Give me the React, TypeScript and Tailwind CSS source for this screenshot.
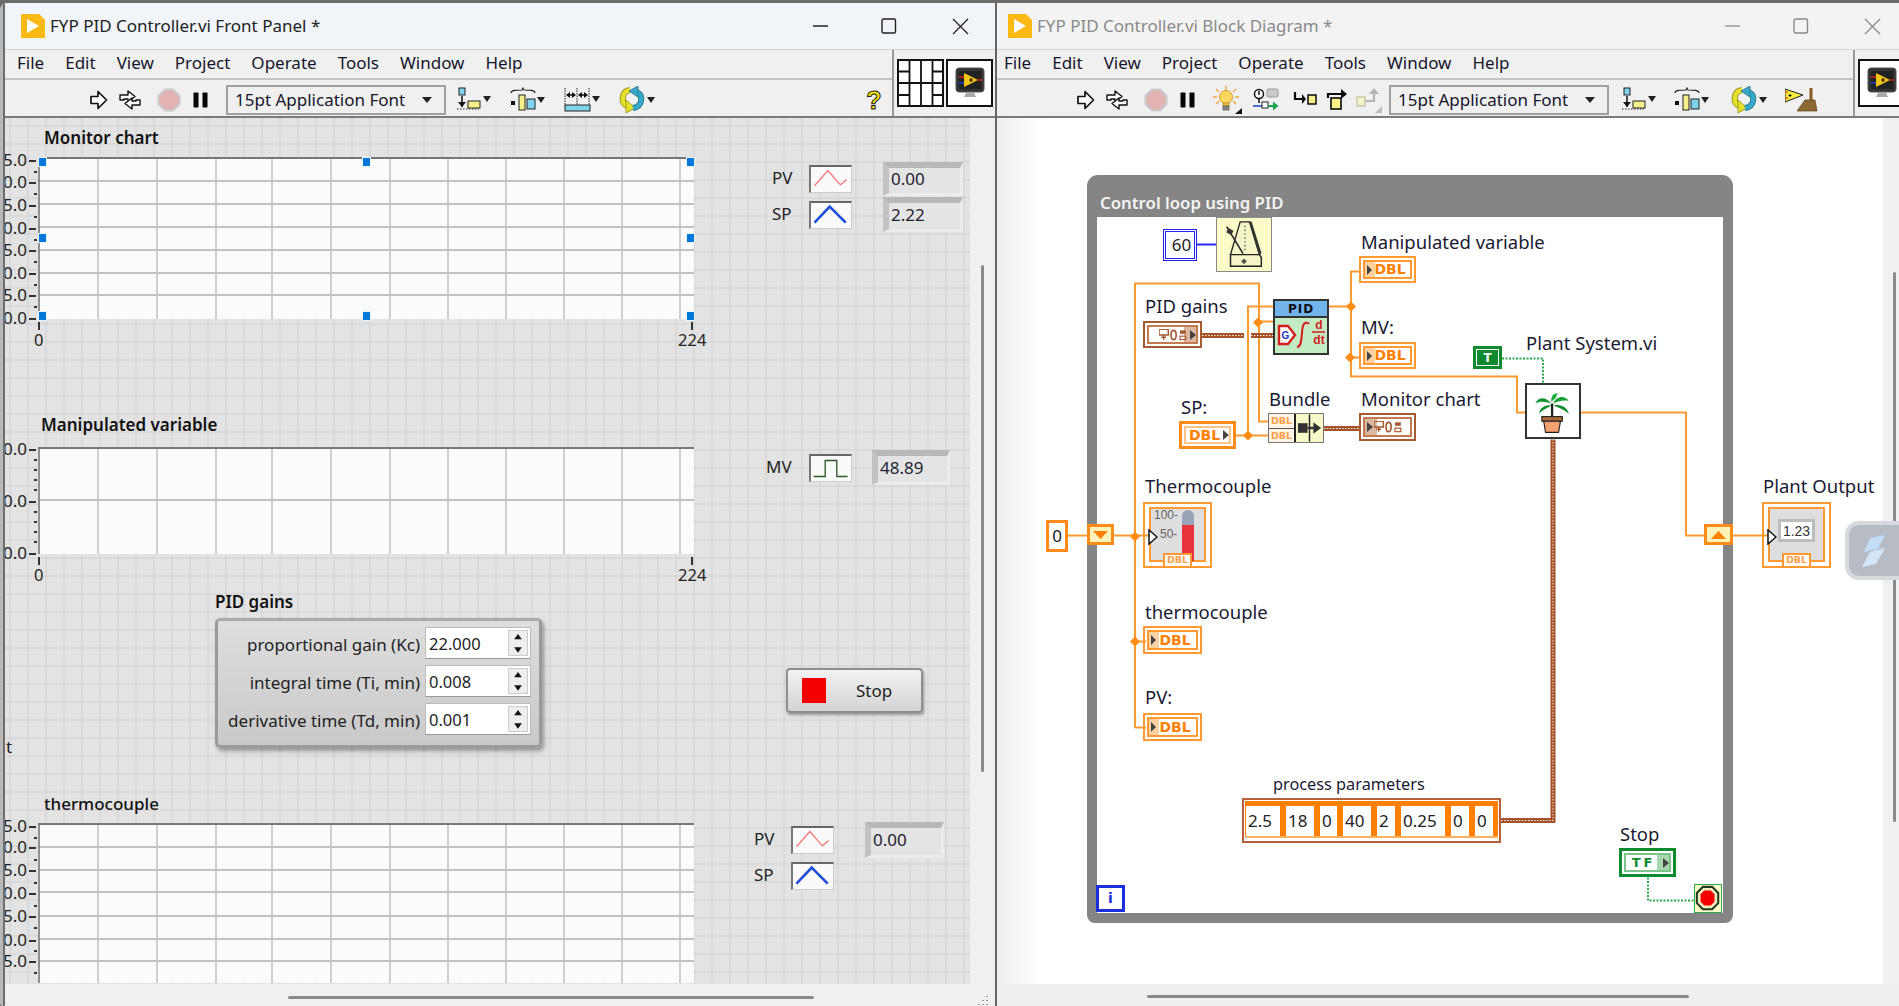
import type { ReactNode } from 'react'

const vLines = [60, 119, 178, 234, 293, 352, 410, 468, 526, 584, 642]

function WindowIcon() {
  return (
    <svg width="24" height="24" viewBox="0 0 24 24" className="shrink-0">
      <path d="M0 0H18L24 6V24H0Z" fill="#fdb913" />
      <path d="M6 5L18 12L6 19Z" fill="#fff" />
    </svg>
  )
}

function WinButtons({ color, last }: { color: string; last: string }) {
  return (
    <div className={`ml-auto flex items-center ${last}`}>
      <svg width="16" height="16" viewBox="0 0 16 16"><path d="M0 8H15" stroke={color} strokeWidth="1.3" /></svg>
      <svg width="16" height="16" viewBox="0 0 16 16" className="ml-[52px]"><rect x="1" y="1" width="13.5" height="14" rx="1.5" fill="none" stroke={color} strokeWidth="1.4" /></svg>
      <svg width="17" height="17" viewBox="0 0 17 17" className="ml-[55px]"><path d="M1 1L16 16M16 1L1 16" stroke={color} strokeWidth="1.3" /></svg>
    </div>
  )
}

function MenuBar({ className }: { className: string }) {
  return (
    <div className={`flex h-[30px] items-center gap-[21px] border-b-2 border-b-[#c4c4c4] pb-[2px] text-[17px] text-[#15152a] ${className}`}>
      {['File', 'Edit', 'View', 'Project', 'Operate', 'Tools', 'Window', 'Help'].map(m => <span key={m}>{m}</span>)}
    </div>
  )
}

function RunArrow() {
  return <svg width="18" height="20" viewBox="0 0 18 20" className="shrink-0"><path d="M1 6.5H8V1.5L16.5 10L8 18.5V13.5H1Z" fill="#fff" stroke="#111" strokeWidth="1.7" strokeLinejoin="round" /></svg>
}

function RunCont({ className }: { className: string }) {
  return (
    <svg width="24" height="24" viewBox="0 0 24 24" className={`shrink-0 ${className}`}>
      <path d="M2 12V7H10V3L17 8.5L10 14V11H6V12Z" fill="#fff" stroke="#111" strokeWidth="1.4" strokeLinejoin="round" />
      <path d="M22 12V17H14V21L7 15.5L14 10V13H18V12Z" fill="#fff" stroke="#111" strokeWidth="1.4" strokeLinejoin="round" />
    </svg>
  )
}

function AbortIcon({ className }: { className: string }) {
  return (
    <svg width="24" height="24" viewBox="0 0 24 24" className={`shrink-0 ${className}`}>
      <path d="M8 1.5H16L22.5 8V16L16 22.5H8L1.5 16V8Z" fill="#e3b3b3" stroke="#c9c9c9" strokeWidth="2" strokeLinejoin="round" />
    </svg>
  )
}

function PauseIcon({ className }: { className: string }) {
  return (
    <svg width="15" height="16" viewBox="0 0 15 16" className={`shrink-0 ${className}`}>
      <rect x="0.5" y="0.5" width="5" height="15" rx="0.8" fill="#050505" />
      <rect x="9.5" y="0.5" width="5" height="15" rx="0.8" fill="#050505" />
    </svg>
  )
}

function Bulb({ className }: { className: string }) {
  return (
    <svg width="29" height="28" viewBox="0 0 29 28" className={`shrink-0 ${className}`}>
      <path d="M13 0V4M3 3L6 6M23 3L20 6M0 11H4M22 11H26M3 18L6 15M23 18L20 15" stroke="#f5a742" strokeWidth="1.4" />
      <circle cx="13" cy="11" r="6.5" fill="#fbd760" stroke="#d49a2a" />
      <rect x="10" y="17" width="6" height="3" fill="#f0c040" stroke="#b08020" strokeWidth="0.7" />
      <rect x="10" y="20" width="6" height="4" fill="#888" stroke="#555" strokeWidth="0.7" />
      <path d="M29 22V28H22Z" fill="#111" />
    </svg>
  )
}

function ProbeIcon({ className }: { className: string }) {
  return (
    <svg width="26" height="26" viewBox="0 0 26 26" className={`shrink-0 ${className}`}>
      <circle cx="6" cy="7" r="4.5" fill="#fff" stroke="#111" strokeWidth="1.5" />
      <path d="M6 4V8" stroke="#111" strokeWidth="1.5" />
      <path d="M6 11.5V16" stroke="#111" strokeWidth="1.5" />
      <rect x="14" y="2" width="11" height="8" rx="1.5" fill="#c9c9c9" stroke="#9a9a9a" />
      <path d="M0 19H12" stroke="#1d4ed8" strokeWidth="1.6" />
      <rect x="9" y="15" width="6" height="6" fill="#fff" stroke="#222" />
      <path d="M15 18H20V14.5L25.5 19L20 23.5V20H15Z" fill="#16a34a" />
    </svg>
  )
}

function StepInto({ className }: { className: string }) {
  return (
    <svg width="24" height="18" viewBox="0 0 24 18" className={`shrink-0 ${className}`}>
      <path d="M2 1V8H10" fill="none" stroke="#0a0a0a" strokeWidth="2.2" />
      <path d="M9 3L13 8L9 13Z" fill="#0a0a0a" />
      <rect x="15" y="4" width="8" height="9" fill="#fbf08a" stroke="#0a0a0a" strokeWidth="1.5" />
    </svg>
  )
}

function StepOver({ className }: { className: string }) {
  return (
    <svg width="22" height="22" viewBox="0 0 22 22" className={`shrink-0 ${className}`}>
      <path d="M2 9V5H15" fill="none" stroke="#0a0a0a" strokeWidth="2.2" />
      <path d="M15 0L21 5L15 10Z" fill="#0a0a0a" />
      <rect x="5" y="9" width="10" height="11" fill="#fbf08a" stroke="#0a0a0a" strokeWidth="1.6" />
    </svg>
  )
}

function StepOut({ className }: { className: string }) {
  return (
    <svg width="26" height="26" viewBox="0 0 26 26" className={`shrink-0 ${className}`}>
      <rect x="1" y="10" width="8" height="9" fill="#f2f2c8" stroke="#c8c8b0" strokeWidth="1.4" />
      <path d="M9 14H18V6" fill="none" stroke="#b5b5b5" strokeWidth="2.2" />
      <path d="M13 7L18 1L23 7Z" fill="#b5b5b5" />
      <path d="M26 19V26H19Z" fill="#bdbdbd" />
    </svg>
  )
}

function Caret({ x, y }: { x: number; y: number }) {
  return <path d={`M${x} ${y}H${x + 8}L${x + 4} ${y + 6}Z`} fill="#222" />
}

function AlignIcon({ className = '' }: { className?: string }) {
  return (
    <svg width="35" height="26" viewBox="0 0 35 26" className={`shrink-0 ${className}`}>
      <rect x="2" y="1" width="6" height="7" fill="#7fd3ea" stroke="#222" />
      <path d="M5 9V20" stroke="#111" strokeWidth="1.5" />
      <path d="M1 15H9L5 20Z" fill="#111" />
      <path d="M0 22H22" stroke="#222" strokeDasharray="1.5 1.5" />
      <rect x="11" y="14" width="12" height="7" fill="#f5f08c" stroke="#222" />
      <Caret x={26} y={9} />
    </svg>
  )
}

function DistIcon({ className = '' }: { className?: string }) {
  return (
    <svg width="36" height="26" viewBox="0 0 36 26" className={`shrink-0 ${className}`}>
      <path d="M1 6C1 3 6 3 12 3L13 1L14 3C20 3 25 3 25 6" fill="none" stroke="#222" strokeWidth="1.1" />
      <rect x="1" y="14" width="4" height="4" fill="#111" />
      <rect x="9" y="8" width="6" height="15" fill="#f5f08c" stroke="#222" />
      <rect x="17" y="12" width="8" height="10" fill="#7fd3ea" stroke="#222" />
      <Caret x={27} y={10} />
    </svg>
  )
}

function ResizeIcon({ className = '' }: { className?: string }) {
  return (
    <svg width="36" height="26" viewBox="0 0 36 26" className={`shrink-0 ${className}`}>
      <path d="M1 1V18M25 1V18M13 1V18" stroke="#222" strokeDasharray="1.5 1" />
      <path d="M3 8H11M15 8H23" stroke="#111" strokeWidth="1.5" />
      <path d="M2 8L6 5V11ZM12 8L8 5V11ZM14 8L18 5V11ZM24 8L20 5V11Z" fill="#111" />
      <rect x="1" y="18" width="25" height="6" fill="#7fd3ea" stroke="#222" />
      <Caret x={28} y={9} />
    </svg>
  )
}

function ReorderIcon({ className = '' }: { className?: string }) {
  return (
    <svg width="37" height="28" viewBox="0 0 37 28" className={`shrink-0 ${className}`}>
      <path d="M11 4C3 5 1 16 8 20" fill="none" stroke="#8a8a10" strokeWidth="6" />
      <path d="M11 4C3 5 1 16 8 20" fill="none" stroke="#e6e02a" strokeWidth="4.5" />
      <path d="M7 14L16 22L7 27Z" fill="#e6e02a" stroke="#8a8a10" strokeWidth="0.8" />
      <path d="M14 22C23 21 25 10 18 6" fill="none" stroke="#1d6f86" strokeWidth="6" />
      <path d="M14 22C23 21 25 10 18 6" fill="none" stroke="#38a8c8" strokeWidth="4.5" />
      <path d="M19 0L10 5L19 11Z" fill="#38a8c8" stroke="#1d6f86" strokeWidth="0.8" />
      <Caret x={28} y={11} />
    </svg>
  )
}

function CleanupIcon({ className }: { className: string }) {
  return (
    <svg width="33" height="26" viewBox="0 0 33 26" className={`shrink-0 ${className}`}>
      <path d="M0 2L18 8L0 15Z" fill="#f5ec3c" stroke="#222" />
      <path d="M5 7V10M3.5 8.5H6.5" stroke="#111" />
      <path d="M-1 5H3M-1 11H3" stroke="#dc2626" />
      <path d="M26 1V14" stroke="#8a5a20" strokeWidth="3" />
      <path d="M20 13H30L32 24H12Z" fill="#8a6a30" stroke="#5a4018" strokeWidth="0.7" />
    </svg>
  )
}

function HelpIcon() {
  return (
    <svg width="20" height="30" viewBox="0 0 20 30" className="ml-auto mr-[8px] shrink-0">
      <text x="10" y="24" textAnchor="middle" fontFamily="'Liberation Sans',sans-serif" fontWeight="700" fontSize="25" fill="#f4e600" stroke="#222" strokeWidth="1">?</text>
    </svg>
  )
}

function FontRing({ className }: { className: string }) {
  return (
    <div className={`flex h-[30px] w-[220px] shrink-0 items-center border-2 border-[#a0a0a0] pl-[7px] pr-[12px] text-[17px] text-[#15152a] ${className}`}>
      <span className="whitespace-nowrap">15pt Application Font</span>
      <svg width="10" height="6" viewBox="0 0 10 6" className="ml-auto"><path d="M0 0H10L5 6Z" fill="#222" /></svg>
    </div>
  )
}

function VIIcon() {
  return (
    <svg width="30" height="32" viewBox="0 0 30 32">
      <rect x="1" y="1" width="28" height="24" rx="3" fill="#333" stroke="#555" />
      <rect x="4" y="4" width="22" height="18" fill="#222" />
      <path d="M9 6L23 13L9 20Z" fill="#f6c515" />
      <path d="M14 13H18M16 11V15" stroke="#111" strokeWidth="1.2" />
      <path d="M4 10H9" stroke="#e11d1d" strokeWidth="1.4" />
      <path d="M4 16H9" stroke="#1d3fe1" strokeWidth="1.4" />
      <path d="M23 13H27" stroke="#e11d1d" strokeWidth="1.4" />
      <path d="M11 26H19L21 30H9Z" fill="#a8a8a8" />
    </svg>
  )
}

function ConnectorPane() {
  return (
    <svg width="47" height="48" viewBox="0 0 47 48" className="shrink-0">
      <rect x="1" y="1" width="45" height="46" fill="#fff" stroke="#111" strokeWidth="2" />
      <path d="M12.5 1V47M24 1V47M35.5 1V47M1 24H46M1 12.5H12.5M1 36H12.5M35.5 12.5H46M35.5 36H46" stroke="#111" strokeWidth="1.8" />
    </svg>
  )
}

type ChartProps = {
  className: string
  titleClass: string
  title: string
  height: number
  hLines: number[]
  labels: { y: number; t: string }[]
  minor: number[]
  xAxis?: boolean
}

function Chart({ className, titleClass, title, height, hLines, labels, minor, xAxis }: ChartProps) {
  return (
    <div className={`absolute flex w-[656px] flex-col ${className}`}>
      <span className={`text-[17px] leading-[24px] text-[#111] ${titleClass}`}>{title}</span>
      <div className="relative w-full">
        <svg width="656" height={height} viewBox={`0 0 656 ${height}`} className="block bg-[#fbfbfb]">
          {vLines.map(x => <path key={x} d={`M${x} 0V${height}`} stroke="#bcbcbc" strokeWidth="1.4" />)}
          {hLines.map(y => <path key={y} d={`M0 ${y}H656`} stroke="#c2c2c2" strokeWidth="1.8" />)}
          <path d="M0 1H656" stroke="#777" strokeWidth="2" />
          <path d="M1 0V500" stroke="#777" strokeWidth="1.6" />
        </svg>
        {labels.map(l => (
          <div key={l.y} className="absolute left-[-37px] flex w-[26px] -translate-y-1/2 justify-end text-[17px] leading-none text-[#222]" style={{ top: l.y - 1 }}>{l.t}</div>
        ))}
        {labels.map(l => <div key={l.y} className="absolute left-[-9px] h-[2px] w-[7px] bg-[#333]" style={{ top: l.y }} />)}
        {minor.map(y => <div key={y} className="absolute left-[-4px] h-[2px] w-[3px] bg-[#333]" style={{ top: y }} />)}
        {xAxis && (
          <>
            <div className="absolute left-0 h-[8px] w-[2px] bg-[#333]" style={{ top: height + 3 }} />
            <div className="absolute left-[653px] h-[8px] w-[2px] bg-[#333]" style={{ top: height + 3 }} />
            <span className="absolute left-[-4px] text-[16.5px] leading-none text-[#222]" style={{ top: height + 13 }}>0</span>
            <span className="absolute left-[640px] text-[16.5px] leading-none text-[#222]" style={{ top: height + 13 }}>224</span>
          </>
        )}
      </div>
    </div>
  )
}

function Swatch({ kind }: { kind: 'pv' | 'sp' | 'mv' }) {
  return (
    <svg viewBox="0 0 43 28" className="h-[28px] w-[43px] shrink-0 border-t-2 border-l-2 border-t-[#666] border-l-[#777] border-r border-b border-r-[#ccc] border-b-[#ccc] bg-[#fafafa]">
      {kind === 'pv' && <polyline points="3,21 18,4 32,20 39,14" fill="none" stroke="#f87878" strokeWidth="1.5" />}
      {kind === 'sp' && <polyline points="3,22 20,4 38,22" fill="none" stroke="#1d4fd8" strokeWidth="3" />}
      {kind === 'mv' && <polyline points="2,23 15,23 15,5 28,5 28,23 40,23" fill="none" stroke="#2f5a2a" strokeWidth="1.5" />}
    </svg>
  )
}

function Readout({ className, value }: { className: string; value: string }) {
  return (
    <div className={`flex h-full items-center border-t-[6px] border-l-[6px] border-r-[3px] border-b-[3px] border-t-[#b8b8b8] border-l-[#c2c2c2] border-r-[#ececec] border-b-[#ececec] bg-[#e4e4e4] pb-[3px] pl-[2px] text-[17px] text-[#223] ${className}`}>{value}</div>
  )
}

function LegendRow({ className, nameClass, name, kind, children }: { className: string; nameClass: string; name: string; kind: 'pv' | 'sp' | 'mv'; children?: ReactNode }) {
  return (
    <div className={`flex items-center ${className}`}>
      <span className={`pb-[2px] text-[17px] leading-[24px] text-[#222] ${nameClass}`}>{name}</span>
      <Swatch kind={kind} />
      {children}
    </div>
  )
}

function Gain({ label, value }: { label: string; value: string }) {
  return (
    <div className="flex h-[32px] items-center justify-end gap-[5px]">
      <span className="whitespace-nowrap pt-[3px] text-[17px] text-[#222]">{label}</span>
      <div className="flex h-full w-[106px] items-center border border-[#bbb] border-b-[#999] bg-white pl-[3px] pr-[2px] text-[16.5px] text-[#222]">
        <span className="pt-[2px]">{value}</span>
        <div className="ml-auto flex h-[26px] w-[20px] flex-col gap-px border border-[#ccc] bg-[#eee]">
          <svg viewBox="0 0 18 12" className="flex-1"><path d="M5 8.5H13L9 3Z" fill="#111" /></svg>
          <svg viewBox="0 0 18 12" className="flex-1"><path d="M5 3.5H13L9 9Z" fill="#111" /></svg>
        </div>
      </div>
    </div>
  )
}

// label above a terminal, both belong to one diagram node
function Node({ className, label, children }: { className: string; label: string; children: ReactNode }) {
  return (
    <div className={`absolute flex flex-col ${className}`}>
      <span className="whitespace-nowrap pl-[2px] text-[18.5px] leading-[24px] text-[#1a1a33]">{label}</span>
      {children}
    </div>
  )
}

function Dbl({ className, control }: { className: string; control?: boolean }) {
  if (control) {
    return (
      <div className={`border-[3px] border-[#ff8c1a] p-[2px] ${className}`}>
        <div className="relative flex h-full items-center justify-center border-2 border-[#ffc48a] pr-[6px] font-['DejaVu_Sans',sans-serif] text-[14px] font-bold text-[#ff8000]">
          DBL
          <svg width="6" height="10" viewBox="0 0 6 10" className="absolute right-0"><path d="M0 0L6 5L0 10Z" fill="#444" /></svg>
        </div>
      </div>
    )
  }
  return (
    <div className={`border-2 border-[#ff9a33] p-[2px] ${className}`}>
      <div className="relative flex h-full items-center justify-center border-2 border-[#ff9a33] pl-[5px] font-['DejaVu_Sans',sans-serif] text-[14px] font-bold text-[#ff8000]">
        <div className="absolute inset-y-0 left-0 w-[10px] bg-[#ffd0a0]" />
        <svg width="5" height="10" viewBox="0 0 5 10" className="absolute left-[2px]"><path d="M0 0L5 5L0 10Z" fill="#444" /></svg>
        <span className="relative">DBL</span>
      </div>
    </div>
  )
}

function ClusterGlyph() {
  return (
    <svg width="28" height="12" viewBox="0 0 24 10">
      <rect x="0" y="0" width="8" height="5" fill="none" stroke="#a85a32" strokeWidth="1.3" />
      <path d="M2 7H6M4 5V9" stroke="#a85a32" strokeWidth="1.3" />
      <ellipse cx="12.5" cy="5" rx="2.2" ry="4" fill="none" stroke="#a85a32" strokeWidth="1.4" />
      <rect x="18" y="1" width="5" height="3" fill="#a85a32" />
      <rect x="18" y="6" width="5" height="3" fill="none" stroke="#a85a32" />
    </svg>
  )
}

function BrownTerm({ className, indicator }: { className: string; indicator?: boolean }) {
  return (
    <div className={`border-2 border-[#a85a32] p-[2px] ${className}`}>
      <div className="relative flex h-full items-center justify-center border-2 border-[#c47a50]">
        {indicator && <div className="absolute inset-y-0 left-0 w-[12px] bg-[#dcb8a0]" />}
        {!indicator && <div className="absolute inset-y-0 right-0 w-[12px] bg-[#dcb8a0]" />}
        <svg width="6" height="10" viewBox="0 0 6 10" className={indicator ? 'absolute left-[2px]' : 'absolute right-0'}><path d="M0 0L6 5L0 10Z" fill="#444" /></svg>
        <div className="relative flex"><ClusterGlyph /></div>
      </div>
    </div>
  )
}

function FrontTerm({ children }: { children: ReactNode }) {
  return (
    <div className="relative h-[66px] w-[69px] border-2 border-[#ff9a33]">
      <div className="absolute left-[4px] top-[3px] h-[55px] w-[57px] border-2 border-[#ff9a33] bg-[#dedede]">{children}</div>
      <svg width="10" height="16" viewBox="0 0 10 16" className="absolute left-[3px] top-[25px]"><path d="M1 1L9 8L1 15Z" fill="#fff" stroke="#111" strokeWidth="1.5" /></svg>
      <div className="absolute bottom-[-2px] left-[18px] flex h-[15px] w-[29px] items-center justify-center border-2 border-[#ff9a33] bg-white font-['DejaVu_Sans',sans-serif] text-[9.5px] font-bold text-[#ffa04a]">DBL</div>
    </div>
  )
}

function Metronome() {
  return (
    <svg viewBox="0 0 56 55" className="absolute left-[219px] top-[99px] h-[55px] w-[56px] border border-[#8a8a8a] bg-[#fbfbc8]">
      <path d="M24 4H34L44 38H14Z" fill="#f5f5c8" stroke="#222" strokeWidth="1.4" />
      <path d="M33 4H36L46 36L44 40Z" fill="#333" />
      <path d="M29 8V34" stroke="#666" strokeWidth="1.5" strokeDasharray="1.5 2.5" />
      <path d="M10 9L27 37" stroke="#222" strokeWidth="1.6" />
      <rect x="10" y="12" width="6" height="5" fill="#333" transform="rotate(30 14 15)" />
      <path d="M14 38H44L46 41V50H14V41Z" fill="#f5f5c8" stroke="#222" strokeWidth="1.5" />
      <path d="M28 42L31 45L28 48L25 45Z" fill="#555" />
    </svg>
  )
}

function PidVi() {
  return (
    <div className="absolute left-[276px] top-[181px] flex h-[56px] w-[56px] flex-col border-2 border-[#333] bg-[#c4ecc4]">
      <div className="flex h-[17px] items-center justify-center border-b-2 border-[#333] bg-[#72b3ec] font-['DejaVu_Sans',sans-serif] text-[12px] font-bold leading-none tracking-[1px] text-[#111]">PID</div>
      <svg viewBox="0 0 52 35" className="flex-1">
        <path d="M4 8H13L20 17L13 26H4Z" fill="#fff" stroke="#d41e1e" strokeWidth="2.4" />
        <text x="6.5" y="21" fontSize="10" fontWeight="700" fill="#2233bb" fontFamily="'Liberation Sans',sans-serif">G</text>
        <path d="M22 29C28 29 26 14 28 8C29 4 33 4 34 6" fill="none" stroke="#d41e1e" strokeWidth="2" />
        <text x="44" y="11" textAnchor="middle" fontSize="12" fontWeight="700" fill="#d41e1e" fontFamily="'Liberation Sans',sans-serif">d</text>
        <path d="M37 14H50" stroke="#d41e1e" strokeWidth="1.5" />
        <text x="44" y="26" textAnchor="middle" fontSize="12" fontWeight="700" fill="#d41e1e" fontFamily="'Liberation Sans',sans-serif">dt</text>
      </svg>
    </div>
  )
}

function PlantVi() {
  return (
    <svg viewBox="0 0 56 56" className="ml-px h-[56px] w-[56px] border-2 border-[#333] bg-white">
      <path d="M27 34V20" stroke="#222" strokeWidth="2.5" />
      <path d="M26 20C20 12 12 13 9 20C14 17 20 18 26 20Z" fill="#15932e" />
      <path d="M26 22C20 21 14 24 13 31C17 26 22 25 26 22Z" fill="#0d8a2a" />
      <path d="M28 20C32 11 41 11 45 17C40 16 34 17 28 20Z" fill="#15a333" />
      <path d="M29 22C36 20 44 24 45 31C40 26 35 25 29 22Z" fill="#0d8a2a" />
      <path d="M26 18C26 12 28 9 33 9C32 13 30 16 26 18Z" fill="#1bb13a" />
      <rect x="16" y="34" width="22" height="5" fill="#a86a3a" stroke="#222" strokeWidth="1.2" />
      <path d="M18 39H36L34 51H20Z" fill="#f2a070" stroke="#222" strokeWidth="1.2" />
    </svg>
  )
}

function Bundle() {
  return (
    <div className="ml-px flex h-[30px] w-[56px] border border-[#777] bg-[#f8f8c8] font-['DejaVu_Sans',sans-serif]">
      <div className="flex w-[27px] flex-col border-r-2 border-[#222] text-[9.5px] font-bold leading-none text-[#ffa04a]">
        <span className="flex flex-1 items-center justify-center border-b border-[#555] bg-[#fff4e6]">DBL</span>
        <span className="flex flex-1 items-center justify-center bg-[#fff4e6]">DBL</span>
      </div>
      <svg viewBox="0 0 28 28" className="flex-1">
        <path d="M14 0V28" stroke="#222" strokeWidth="1.5" />
        <rect x="2" y="9" width="10" height="10" fill="#333" />
        <path d="M12 14H20" stroke="#333" strokeWidth="2.5" />
        <path d="M18 8L26 14L18 20Z" fill="#333" />
      </svg>
    </div>
  )
}

function Junction({ x, y }: { x: number; y: number }) {
  return <path d={`M${x - 5} ${y}L${x} ${y - 5}L${x + 5} ${y}L${x} ${y + 5}Z`} fill="#ff8a14" />
}

function Wires() {
  const brown = 'M1202 335H1244M1251 335H1273M1324 428H1359M1501 820H1553V439'
  return (
    <svg viewBox="997 118 886 865" className="absolute inset-0 h-full w-full">
      <path d="M1068 535H1087M1114 535H1149M1135 727V283H1259V421H1268M1135 727H1146M1135 641H1146M1259 321H1273M1236 435H1268M1248 435V306H1273M1329 306H1351M1359 271H1351V376H1517V412H1525M1351 357H1359M1581 412H1686V535H1704M1733 535H1770" fill="none" stroke="#ff9a33" strokeWidth="2" />
      <path d="M1197 244H1216" stroke="#2a2aee" strokeWidth="2" />
      <path d="M1502 358H1543V383M1648 877V900H1694" fill="none" stroke="#2fa84f" strokeWidth="2" strokeDasharray="2 1.5" />
      <path d={brown} fill="none" stroke="#a5532a" strokeWidth="5" />
      <path d={brown} fill="none" stroke="#f8e8dc" strokeWidth="1" strokeDasharray="1.5 1.5" />
      <Junction x={1135} y={536} />
      <Junction x={1135} y={641} />
      <Junction x={1258} y={322} />
      <Junction x={1248} y={435} />
      <Junction x={1351} y={306} />
      <Junction x={1350} y={357} />
    </svg>
  )
}

const clusterCells = [
  { t: '2.5', c: 'w-[34px]' },
  { t: '18', c: 'w-[28px]' },
  { t: '0', c: 'w-[17px]' },
  { t: '40', c: 'w-[28px]' },
  { t: '2', c: 'w-[18px]' },
  { t: '0.25', c: 'w-[44px]' },
  { t: '0', c: 'w-[18px]' },
  { t: '0', c: 'w-[18px]' },
]

const handles = [
  'left-[38px] top-[39px]', 'left-[362px] top-[39px]', 'left-[686px] top-[39px]',
  'left-[38px] top-[115px]', 'left-[686px] top-[115px]',
  'left-[38px] top-[193px]', 'left-[362px] top-[193px]', 'left-[686px] top-[193px]',
]

const m1 = [14, 36, 59, 82, 104, 127, 149]
const tickLabels1 = ['5.0', '0.0', '5.0', '0.0', '5.0', '0.0', '5.0', '0.0']

function FrontPanel() {
  return (
    <div className="relative flex h-[1006px] w-[997px] shrink-0 flex-col overflow-hidden rounded-tl-[8px] rounded-bl-[8px] border-r-2 border-[#666] bg-[#f0f0f0]">
      <div className="flex h-[47px] shrink-0 items-center border-b border-[#d4d4d4] bg-[#f1f5f9] pl-[21px]">
        <WindowIcon />
        <span className="ml-[5px] whitespace-nowrap text-[17px] text-[#222]">FYP PID Controller.vi Front Panel *</span>
        <WinButtons color="#222" last="mr-[26px]" />
      </div>
      <div className="flex h-[68px] shrink-0 border-b-2 border-b-[#7a7a7a]">
        <div className="flex w-[894px] flex-col border-r-2 border-[#999]">
          <MenuBar className="pl-[17px]" />
          <div className="flex flex-1 items-center pl-[90px] pt-[3px]">
            <RunArrow />
            <RunCont className="ml-[10px]" />
            <AbortIcon className="ml-[15px]" />
            <PauseIcon className="ml-[12px]" />
            <FontRing className="ml-[18px]" />
            <AlignIcon className="ml-[11px]" />
            <DistIcon className="ml-[18px]" />
            <ResizeIcon className="ml-[18px]" />
            <ReorderIcon className="ml-[19px]" />
            <HelpIcon />
          </div>
        </div>
        <div className="flex h-full items-center pl-[3px]">
          <ConnectorPane />
          <div className="ml-[2px] flex h-[48px] w-[47px] items-center justify-center border-2 border-[#111] bg-white">
            <VIIcon />
          </div>
        </div>
      </div>

      <div className="flex min-h-0 flex-1">
        {/* panel canvas */}
        <div className="relative w-[970px] shrink-0 overflow-hidden bg-[#e3e3e3] bg-[linear-gradient(#d0d0d0_1.5px,transparent_1.5px),linear-gradient(90deg,#d0d0d0_1.5px,transparent_1.5px)] bg-[size:18px_18px] bg-[position:9.5px_7.5px]">
          <Chart
            className="left-[38px] top-[8px] gap-[7px]"
            titleClass="pl-[6px] font-semibold"
            title="Monitor chart"
            height={162}
            hLines={[24, 47, 70, 93, 116, 138]}
            labels={[3, 25, 48, 71, 93, 116, 138, 161].map((y, i) => ({ y, t: tickLabels1[i] }))}
            minor={m1}
            xAxis
          />
          {handles.map(h => <div key={h} className={`absolute h-[10px] w-[9px] border border-[#e8f2fb] bg-[#0078d7] ${h}`} />)}
          <div className="absolute left-[772px] top-[44px] flex flex-col gap-px">
            <LegendRow className="h-[34px]" nameClass="w-[37px]" name="PV" kind="pv">
              <Readout className="ml-[31px] w-[80px]" value="0.00" />
            </LegendRow>
            <LegendRow className="h-[35px]" nameClass="w-[37px]" name="SP" kind="sp">
              <Readout className="ml-[31px] w-[80px]" value="2.22" />
            </LegendRow>
          </div>

          <Chart
            className="left-[38px] top-[295px] gap-[10px]"
            titleClass="pl-[3px] font-semibold"
            title="Manipulated variable"
            height={107}
            hLines={[53]}
            labels={[{ y: 2, t: '0.0' }, { y: 54, t: '0.0' }, { y: 106, t: '0.0' }]}
            minor={[12, 22, 32, 42, 64, 74, 84, 94]}
            xAxis
          />
          <LegendRow className="absolute left-[766px] top-[332px] h-[35px]" nameClass="w-[43px]" name="MV" kind="mv">
            <Readout className="ml-[20px] w-[78px]" value="48.89" />
          </LegendRow>

          <div className="absolute left-[215px] top-[472px] flex flex-col gap-[4px]">
            <span className="text-[17px] font-semibold leading-[24px] text-[#111]">PID gains</span>
            <div className="flex h-[130px] w-[327px] flex-col gap-[6px] rounded-[5px] border-[3px] border-[#9a9a9a] border-t-[#aaa] bg-linear-to-b from-[#dedede] to-[#c9c9c9] pt-[6px] pr-[8px] shadow-[2px_3px_4px_rgba(0,0,0,0.35)]">
              <Gain label="proportional gain (Kc)" value="22.000" />
              <Gain label="integral time (Ti, min)" value="0.008" />
              <Gain label="derivative time (Td, min)" value="0.001" />
            </div>
          </div>

          <button className="absolute left-[786px] top-[550px] flex h-[45px] w-[137px] items-center rounded-[4px] border-2 border-[#8e8e8e] bg-linear-to-b from-[#f2f2f2] to-[#d4d4d4] pl-[14px] text-[17px] text-[#222] shadow-[1px_2px_3px_rgba(0,0,0,0.35)]">
            <span className="h-[25px] w-[24px] bg-[#f40000]" />
            <span className="ml-[30px]">Stop</span>
          </button>

          <span className="absolute left-[6px] top-[617px] text-[17px] leading-[24px] text-[#222]">t</span>

          <Chart
            className="left-[38px] top-[674px] gap-[7px]"
            titleClass="pl-[6px] font-medium"
            title="thermocouple"
            height={160}
            hLines={[24, 47, 69, 93, 116, 138]}
            labels={[3, 24, 47, 70, 93, 117, 138].map((y, i) => ({ y, t: tickLabels1[i] }))}
            minor={m1}
          />
          <div className="absolute left-[754px] top-[704px] flex flex-col gap-[4px]">
            <LegendRow className="h-[36px]" nameClass="w-[37px]" name="PV" kind="pv">
              <Readout className="ml-[31px] w-[79px]" value="0.00" />
            </LegendRow>
            <LegendRow className="h-[28px]" nameClass="w-[37px]" name="SP" kind="sp" />
          </div>
        </div>
        {/* right scroll gutter */}
        <div className="relative flex-1 bg-[#f0f0f0]">
          <div className="absolute left-[11px] top-[147px] h-[507px] w-[3px] rounded-full bg-[#8a8a8a]" />
        </div>
      </div>

      <div className="relative h-[25px] shrink-0 bg-[#f0f0f0]">
        <div className="absolute left-[288px] top-[12px] h-[3px] w-[526px] rounded-full bg-[#8a8a8a]" />
        <svg width="12" height="12" viewBox="0 0 12 12" className="absolute right-[6px] top-[11px]">
          <path d="M10 1V2M6 5V6M10 5V6M2 9V10M6 9V10M10 9V10" stroke="#999" strokeWidth="2" />
        </svg>
      </div>
      <div className="absolute inset-y-0 left-0 w-[5px] border-l-[3px] border-r-2 border-l-[#b8b8b8] border-r-[#6e6e6e] bg-[#999]" />
    </div>
  )
}

function BlockDiagram() {
  return (
    <div className="flex h-[1006px] min-w-0 flex-1 flex-col overflow-hidden bg-[#f0f0f0]">
      <div className="flex h-[47px] shrink-0 items-center border-b border-[#d4d4d4] bg-[#f3f3f3] pl-[11px]">
        <WindowIcon />
        <span className="ml-[5px] whitespace-nowrap text-[17px] text-[#8a8a8a]">FYP PID Controller.vi Block Diagram *</span>
        <WinButtons color="#8a8a8a" last="mr-[18px]" />
      </div>
      <div className="flex h-[68px] shrink-0 border-b-2 border-b-[#7a7a7a]">
        <div className="flex w-[858px] shrink-0 flex-col border-r-2 border-[#999]">
          <MenuBar className="pl-[7px]" />
          <div className="flex flex-1 items-center pl-[80px] pt-[3px]">
            <RunArrow />
            <RunCont className="ml-[10px]" />
            <AbortIcon className="ml-[15px]" />
            <PauseIcon className="ml-[12px]" />
            <Bulb className="ml-[18px]" />
            <ProbeIcon className="ml-[11px]" />
            <StepInto className="ml-[14px]" />
            <StepOver className="ml-[9px]" />
            <StepOut className="ml-[8px]" />
            <FontRing className="ml-[7px]" />
            <AlignIcon className="ml-[13px]" />
            <DistIcon className="ml-[17px]" />
            <ReorderIcon className="ml-[21px]" />
            <CleanupIcon className="ml-[17px]" />
          </div>
        </div>
        <div className="flex h-full items-center pl-[3px]">
          <div className="flex h-[48px] w-[47px] shrink-0 items-center justify-center border-2 border-[#111] bg-white">
            <VIIcon />
          </div>
        </div>
      </div>

      <div className="flex min-h-0 flex-1">
        {/* diagram canvas */}
        <div className="relative w-[886px] shrink-0 overflow-hidden bg-white">
          <div className="absolute inset-y-0 left-0 w-[45px] bg-linear-to-r from-[#efefef] to-white" />
          <div className="absolute left-[90px] top-[57px] h-[748px] w-[646px] rounded-t-[11px] rounded-b-[8px] border-x-[10px] border-b-[10px] border-t-[42px] border-[#858585] bg-white" />
          <span className="absolute left-[103px] top-[73px] whitespace-nowrap text-[16.8px] font-semibold leading-[24px] text-[#f4f4f4]">Control loop using PID</span>

          <Wires />

          <div className="absolute left-[166px] top-[111px] flex h-[32px] w-[34px] items-center justify-center border-[3px] border-double border-[#2020e8] bg-white pl-[3px] text-[17px] text-[#222]">60</div>
          <Metronome />

          <Node className="left-[362px] top-[112px] gap-[2px]" label="Manipulated variable">
            <Dbl className="h-[27px] w-[57px]" />
          </Node>
          <Node className="left-[146px] top-[176px] gap-[3px]" label="PID gains">
            <BrownTerm className="h-[27px] w-[59px]" />
          </Node>
          <PidVi />
          <Node className="left-[362px] top-[197px] gap-[3px]" label="MV:">
            <Dbl className="h-[27px] w-[57px]" />
          </Node>

          <div className="absolute left-[476px] top-[228px] flex h-[23px] w-[29px] items-center justify-center bg-[#0f8a2e] p-[3px]">
            <span className="flex h-full w-full items-center justify-center border border-white font-['DejaVu_Sans',sans-serif] text-[12px] font-bold leading-none text-white">T</span>
          </div>
          <Node className="left-[527px] top-[213px] gap-[28px]" label="Plant System.vi">
            <PlantVi />
          </Node>

          <Node className="left-[182px] top-[277px] gap-[2px]" label="SP:">
            <Dbl className="h-[28px] w-[57px]" control />
          </Node>
          <Node className="left-[270px] top-[269px] gap-[2px]" label="Bundle">
            <Bundle />
          </Node>
          <Node className="left-[362px] top-[269px] gap-[2px]" label="Monitor chart">
            <BrownTerm className="h-[28px] w-[57px]" indicator />
          </Node>

          <div className="absolute left-[49px] top-[402px] flex h-[32px] w-[22px] items-center justify-center border-[3px] border-[#ff8c1a] bg-white text-[17px] text-[#222]">0</div>
          <div className="absolute left-[90px] top-[406px] flex h-[21px] w-[27px] items-center justify-center border-[3px] border-[#ff8c1a] bg-[#fff2b8]">
            <svg width="15" height="8" viewBox="0 0 15 8"><path d="M0 0H15L7.5 8Z" fill="#ff8000" /></svg>
          </div>

          <Node className="left-[146px] top-[356px] gap-[4px]" label="Thermocouple">
            <FrontTerm>
              <span className="absolute left-[3px] top-[-1px] font-['Liberation_Sans',sans-serif] text-[12px] leading-[14px] text-[#666]">100-</span>
              <span className="absolute left-[9px] top-[18px] font-['Liberation_Sans',sans-serif] text-[12px] leading-[14px] text-[#666]">50-</span>
              <div className="absolute left-[31px] top-[1px] h-[51px] w-[12px] rounded-t-full bg-[#9aa4b8]">
                <div className="absolute bottom-0 h-[36px] w-full bg-[#e8323c]" />
              </div>
            </FrontTerm>
          </Node>

          <Node className="left-[146px] top-[482px] gap-[2px]" label="thermocouple">
            <Dbl className="h-[28px] w-[59px]" />
          </Node>
          <Node className="left-[146px] top-[567px] gap-[4px]" label="PV:">
            <Dbl className="h-[28px] w-[59px]" />
          </Node>

          <div className="absolute left-[245px] top-[655px] flex flex-col gap-[3px]">
            <span className="whitespace-nowrap pl-[31px] text-[16.3px] leading-[22px] text-[#1a1a33]">process parameters</span>
            <div className="h-[45px] w-[259px] border-2 border-[#b5603a] bg-white p-[1px]">
              <div className="flex h-[37px] w-[253px] items-end gap-[6px] border-b-2 border-[#ffb060] bg-[#ff8000] pl-[1px] pt-[3px]">
                {clusterCells.map((c, i) => (
                  <div key={i} className={`flex h-[30px] shrink-0 items-center bg-white pl-[2px] text-[17px] text-[#222] ${c.c}`}>{c.t}</div>
                ))}
              </div>
            </div>
          </div>

          <Node className="left-[621px] top-[704px] gap-[2px]" label="Stop">
            <div className="ml-px h-[29px] w-[57px] border-[3px] border-[#0f8a2e] p-[2px]">
              <div className="relative flex h-full items-center justify-center border-2 border-[#7cc48c] pr-[8px] font-['DejaVu_Sans',sans-serif] text-[13px] font-bold tracking-[3px] text-[#0f8a2e]">
                TF
                <div className="absolute inset-y-0 right-0 w-[12px] bg-[#a8d8b0]" />
                <svg width="6" height="10" viewBox="0 0 6 10" className="absolute right-0"><path d="M0 0L6 5L0 10Z" fill="#444" /></svg>
              </div>
            </div>
          </Node>
          <svg viewBox="0 0 28 29" className="absolute left-[697px] top-[766px] h-[29px] w-[28px] border border-[#2fa84f] bg-[#fbfbc8]">
            <path d="M8.5 2H18.5L25 8.5V19.5L18.5 26H8.5L2 19.5V8.5Z" fill="#f0ecc0" stroke="#1f3a1f" strokeWidth="2.2" />
            <path d="M10 6H17L21 10V18L17 22H10L6 18V10Z" fill="#f40000" />
          </svg>
          <div className="absolute left-[99px] top-[767px] flex h-[27px] w-[29px] items-center justify-center border-[3px] border-[#1a2ee0] bg-white font-['DejaVu_Sans',sans-serif] text-[14px] font-bold text-[#1a2ee0]">i</div>

          <div className="absolute left-[707px] top-[406px] flex h-[21px] w-[29px] items-center justify-center border-[3px] border-[#ff8c1a] bg-[#fff2b8]">
            <svg width="15" height="8" viewBox="0 0 15 8"><path d="M0 8H15L7.5 0Z" fill="#ff8000" /></svg>
          </div>
          <Node className="left-[764px] top-[356px] gap-[4px]" label="Plant Output">
            <div className="ml-px">
              <FrontTerm>
                <div className="absolute left-[8px] top-[10px] flex h-[23px] w-[37px] items-center justify-center border-[3px] border-[#bdbdbd] bg-white font-['Liberation_Sans',sans-serif] text-[14px] leading-none text-[#333]">1.23</div>
              </FrontTerm>
            </div>
          </Node>
        </div>
        {/* right scroll gutter */}
        <div className="relative flex-1 bg-[#f0f0f0]">
          <div className="absolute left-[10px] top-[154px] h-[550px] w-[3px] rounded-full bg-[#8a8a8a]" />
        </div>
      </div>

      <div className="relative h-[25px] shrink-0 bg-[#efefef]">
        <div className="absolute left-[150px] top-[11px] h-[3px] w-[542px] rounded-full bg-[#8a8a8a]" />
      </div>
    </div>
  )
}

export default function App() {
  return (
    <div className="relative flex h-[1006px] w-[1899px] overflow-hidden border-t-[3px] border-[#6b6b6b] bg-[#6b6b6b] font-['Noto_Sans',sans-serif]">
      <FrontPanel />
      <BlockDiagram />
      {/* floating capture widget */}
      <div className="absolute left-[1845px] top-[518px] flex h-[59px] w-[70px] items-center rounded-[14px] border-[4px] border-[#d6d9de] bg-[#b7bbc3] pl-[12px]">
        <svg width="26" height="34" viewBox="0 0 26 34">
          <path d="M9 4L24 1L17 15L3 18Z" fill="#c2dcf6" />
          <path d="M9 18L24 14L15 30L1 33Z" fill="#d3e6f9" />
        </svg>
      </div>
    </div>
  )
}
